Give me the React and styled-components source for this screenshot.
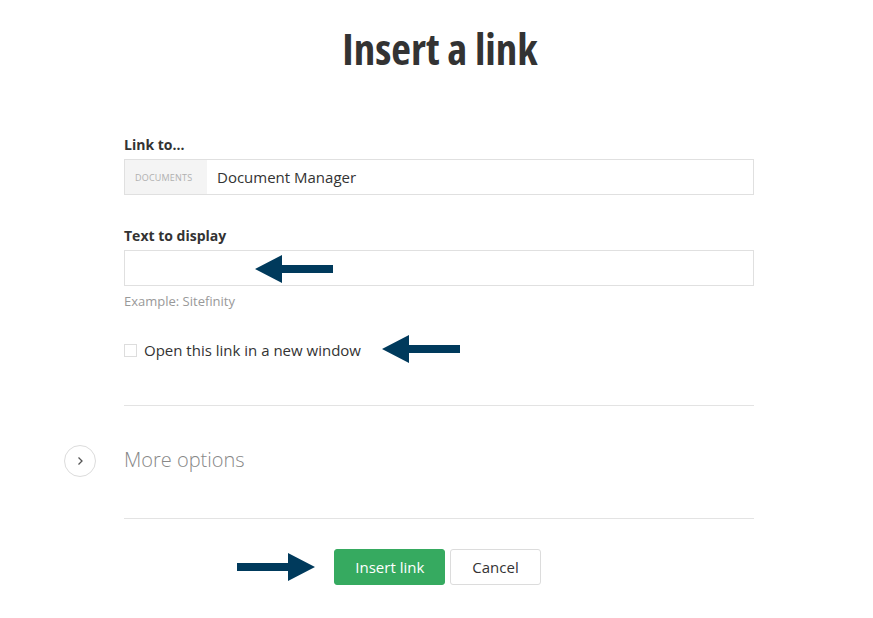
import styled, { createGlobalStyle } from "styled-components";

const GlobalStyle = createGlobalStyle`
  body {
    margin: 0;
    background: #fff;
    font-family: "Open Sans", "Liberation Sans", sans-serif;
    color: #333;
  }
`;

const Page = styled.div`
  position: relative;
  width: 630px;
  margin-left: 124px;
  padding-top: 23px;
  height: 618px;
  box-sizing: border-box;
`;

const Title = styled.h1`
  margin: 0 0 60px;
  text-align: center;
  font-size: 43px;
  line-height: 52px;
  font-weight: 700;
  font-stretch: 75%;
  color: #333;
  transform: translateX(1px);
`;

const Field = styled.div`
  display: flex;
  flex-direction: column;
  margin-bottom: ${(props) => props.gap || 0}px;
`;

const Label = styled.label`
  font-size: 14px;
  font-weight: 700;
  line-height: 20px;
  margin-bottom: 4px;
  color: #333;
`;

const InputBox = styled.div`
  display: flex;
  align-items: stretch;
  height: 36px;
  border: 1px solid #e0e0e0;
  box-sizing: border-box;
  background: #fff;
`;

const Prefix = styled.span`
  display: flex;
  align-items: center;
  padding: 0 10px;
  width: 82px;
  box-sizing: border-box;
  background: #f4f4f4;
  font-size: 9px;
  color: #b0b0b0;
  letter-spacing: 0.2px;
`;

const Value = styled.span`
  display: flex;
  align-items: center;
  padding-left: 10px;
  font-size: 15px;
  color: #333;
`;

const Hint = styled.div`
  font-size: 13px;
  color: #999;
  margin-top: 6px;
`;

const CheckRow = styled.label`
  display: flex;
  align-items: center;
  gap: 7px;
  font-size: 15px;
  color: #333;
  margin-bottom: 45px;
`;

const Box = styled.span`
  width: 13px;
  height: 13px;
  border: 1px solid #ddd;
  box-sizing: border-box;
  background: #fff;
`;

const Divider = styled.hr`
  border: 0;
  border-top: 1px solid #e3e3e3;
  margin: 0;
`;

const MoreRow = styled.div`
  display: flex;
  align-items: center;
  gap: 28px;
  margin-left: -60px;
  height: 112px;
  padding-bottom: 5px;
  box-sizing: border-box;
`;

const Circle = styled.span`
  width: 32px;
  height: 32px;
  border: 1px solid #dcdcdc;
  border-radius: 50%;
  box-sizing: border-box;
  display: flex;
  align-items: center;
  justify-content: center;
  transform: translateY(1px);
`;

const MoreText = styled.span`
  font-size: 20px;
  font-weight: 300;
  color: #888;
`;

const Actions = styled.div`
  display: flex;
  justify-content: center;
  gap: 5px;
  margin-top: 30px;
  padding-right: 3px;
`;

const Button = styled.button`
  height: 36px;
  padding: 0 ${(props) => (props.primary ? 20 : 21)}px;
  font-family: inherit;
  font-size: 15px;
  border-radius: 3px;
  border: 1px solid ${(props) => (props.primary ? "#36aa60" : "#dcdcdc")};
  background: ${(props) => (props.primary ? "#36aa60" : "#fff")};
  color: ${(props) => (props.primary ? "#fff" : "#333")};
`;

const Arrow = styled.svg`
  position: absolute;
  left: ${(props) => props.x}px;
  top: ${(props) => props.y}px;
`;

const ArrowLeft = ({ x, y }) => (
  <Arrow x={x} y={y} width="78" height="30" viewBox="0 0 78 30">
    <polygon points="0,15 27,1 27,11 78,11 78,19 27,19 27,29" fill="#003a5c" />
  </Arrow>
);

const ArrowRight = ({ x, y }) => (
  <Arrow x={x} y={y} width="78" height="30" viewBox="0 0 78 30">
    <polygon points="78,15 51,1 51,11 0,11 0,19 51,19 51,29" fill="#003a5c" />
  </Arrow>
);

const App = () => {
  return (
    <>
      <GlobalStyle />
      <Page>
        <Title>Insert a link</Title>
        <Field gap={31}>
          <Label>Link to...</Label>
          <InputBox>
            <Prefix>DOCUMENTS</Prefix>
            <Value>Document Manager</Value>
          </InputBox>
        </Field>
        <Field gap={30}>
          <Label>Text to display</Label>
          <InputBox />
          <Hint>Example: Sitefinity</Hint>
        </Field>
        <CheckRow>
          <Box />
          Open this link in a new window
        </CheckRow>
        <Divider />
        <MoreRow>
          <Circle>
            <svg width="10" height="10" viewBox="0 0 10 10">
              <path d="M3.5 1.5 L7 5 L3.5 8.5" fill="none" stroke="#555" strokeWidth="1.3" />
            </svg>
          </Circle>
          <MoreText>More options</MoreText>
        </MoreRow>
        <Divider />
        <Actions>
          <Button primary>Insert link</Button>
          <Button>Cancel</Button>
        </Actions>
        <ArrowLeft x={131} y={254} />
        <ArrowLeft x={258} y={334} />
        <ArrowRight x={113} y={552} />
      </Page>
    </>
  );
};

export default App;
